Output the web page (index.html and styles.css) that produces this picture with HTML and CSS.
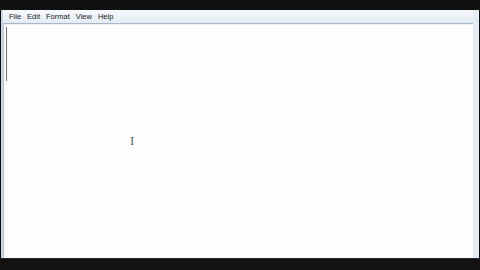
FILE: index.html
```html
<!DOCTYPE html>
<html lang="en">
<head>
<meta charset="utf-8"/>
<title>Untitled - Notepad</title>
<link rel="stylesheet" href="styles.css">
</head>
<body>
<div class="topbar"></div>
<div class="window">
  <div class="menubar">
    <span class="menu">File</span>
    <span class="menu">Edit</span>
    <span class="menu">Format</span>
    <span class="menu">View</span>
    <span class="menu">Help</span>
  </div>
  <div class="editor">
    <div class="caret"></div>
    <div class="ibeam">I</div>
  </div>
</div>
<div class="bottombar"></div>
</body>
</html>
```

FILE: styles.css
```css
html, body {
    margin: 0;
    padding: 0;
}
body {
    width: 480px;
    height: 270px;
    background-color: #0e0e0e;
    font-family: "Liberation Sans", Arial, sans-serif;
    display: flex;
    flex-direction: column;
    overflow: hidden;
}
.topbar {
    height: 10px;
    background-color: #101010;
}
.window {
    flex: 1;
    display: flex;
    flex-direction: column;
    margin: 0 1px 0 1px;
    background-color: #dfe8f2;
    border-left: 2px solid #c9d6e4;
    border-right: 6px solid #e3ebf3;
}
.menubar {
    height: 13px;
    display: flex;
    align-items: center;
    gap: 0;
    padding-left: 6px;
    background: linear-gradient(#f7f9fc, #e4ebf4);
    border-bottom: 1px solid #a9b7c8;
    font-size: 7.5px;
    color: #222;
}
.menu {
    padding: 0 4px 0 0;
    margin-right: 2px;
}
.editor {
    flex: 1;
    position: relative;
    background-color: #fdfdfe;
    border-left: 1px solid #b8c4d2;
    border-top: 1px solid #e8eef5;
}
.caret {
    position: absolute;
    left: 2px;
    top: 2px;
    width: 1px;
    height: 54px;
    background-color: #6c727a;
}
.ibeam {
    position: absolute;
    left: 126px;
    top: 110px;
    font-family: "DejaVu Serif", serif;
    font-size: 11px;
    color: #555;
}
.bottombar {
    height: 11px;
    background-color: #121212;
    border-top: 1px solid #2a2a2a;
}
```
